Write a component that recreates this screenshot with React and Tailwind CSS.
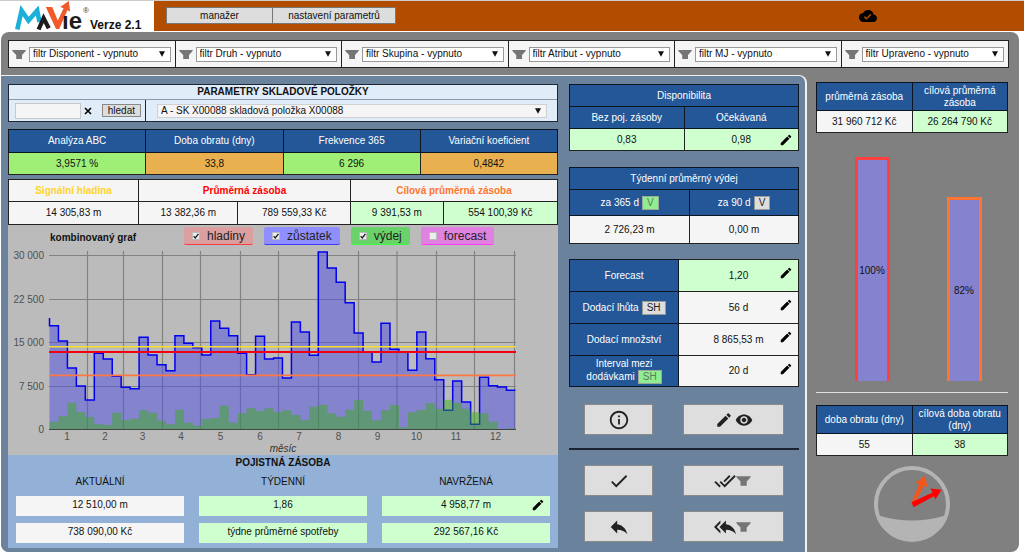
import React from "react";
import {
  MdCheck,
  MdCloudDone,
  MdDoneAll,
  MdEdit,
  MdInfoOutline,
  MdReply,
  MdReplyAll,
  MdVisibility,
} from "react-icons/md";

const filters = ["Disponent", "Druh", "Skupina", "Atribut", "MJ", "Upraveno"];

// Weekly stock level and consumption, as heights on the chart's vertical scale.
const stock = [
  242, 288, 369, 423, 465, 325, 342, 394, 427, 431, 277, 330, 359, 377, 272, 295, 308, 330, 228, 250, 272, 325, 389,
  274, 342, 339, 399, 231, 261, 331, 21, 69, 112, 173, 264, 321, 351, 235, 313, 321, 376, 261, 341, 404, 496, 408, 471,
  538, 397, 422, 426, 436,
].map((v) => 245 + v / 3);

const issues = [
  530, 514, 473, 501, 516, 538, 540, 503, 525, 521, 496, 503, 527, 538, 494, 533, 542, 522, 519, 482, 533, 505, 490,
  498, 490, 501, 496, 510, 526, 485, 479, 505, 515, 494, 465, 498, 526, 496, 480, 547, 502, 494, 475, 491, 464, 473,
  491, 502, 505, 530, 552, 550,
].map((v) => 245 + v / 3);

const LEFT = 49.5;
const STEP = 8.96;
const BASE = 429.5;

const at = (i) => LEFT + i * STEP;
const outline = "M" + LEFT + " 318 " + stock.map((y, i) => `L${at(i)} ${y} L${at(i + 1)} ${y}`).join(" ");
const area = `M${LEFT} ${BASE} ` + stock.map((y, i) => `L${at(i)} ${y} L${at(i + 1)} ${y}`).join(" ") + ` V${BASE} Z`;
const greenArea =
  `M${LEFT} ${BASE} ` + issues.map((y, i) => `L${at(i)} ${y} L${at(i + 1)} ${y}`).join(" ") + ` V${BASE} Z`;

const gridX = [87.5, 123.5, 162.5, 200.5, 240.5, 278.5, 318.5, 358.5, 397, 436.5, 474.5, 514.5];
const months = [67, 105, 142.5, 181, 220.5, 260, 299, 338.5, 377.5, 416.5, 456, 495.5];
const gridY = [
  [255.5, "30 000"],
  [299.5, "22 500"],
  [342.5, "15 000"],
  [386.5, "7 500"],
  [429.5, "0"],
];

const HEAD = "border border-[#0c1420] bg-[#235797] text-white font-normal p-0";
const GREEN = "border border-[#222] bg-[#cfffcf] p-0";
const PLAIN = "border border-[#222] bg-[#f5f5f5] p-0";
const TABLE = "w-full table-fixed border-collapse text-center leading-3";

function Funnel({ className }) {
  return (
    <svg viewBox="0 0 14 9" className={className} fill="#757575" aria-hidden="true">
      <path d="M0 0H14L13 1.8L10 5V9H4.2V5L1 1.8Z" />
    </svg>
  );
}

function Picker({ label, value, className }) {
  return (
    <div className="grid min-w-0 flex-1 items-center">
      <select
        aria-label={label}
        className={"col-start-1 row-start-1 w-full appearance-none truncate rounded-none border pl-[3px] leading-3 " + className}
      >
        <option>{value}</option>
      </select>
      <svg
        viewBox="0 0 6 6"
        className="pointer-events-none col-start-1 row-start-1 mr-[6px] h-[6px] w-[6px] justify-self-end"
        aria-hidden="true"
      >
        <path d="M0 0.3H6L3 5.8Z" fill="#111" />
      </svg>
    </div>
  );
}

function EditButton({ label }) {
  return (
    <button aria-label={label} className="block text-black">
      <MdEdit className="h-[14px] w-[14px]" />
    </button>
  );
}

function Editable({ value, label, raised }) {
  return (
    <div className="grid h-3 grid-rows-[12px] items-center">
      <span className="col-start-1 row-start-1">{value}</span>
      <span className={"col-start-1 row-start-1 justify-self-end pr-[5px] " + (raised ? "pb-[5px]" : "")}>
        <EditButton label={label} />
      </span>
    </div>
  );
}

function Logo() {
  return (
    <svg viewBox="0 0 75 31" className="h-[31px] w-[75px] overflow-visible" role="img" aria-label="MaVie">
      <path d="M2.3 29.5L6.6 10.5L13.5 20.5L22.2 10.5L24.5 22" fill="none" stroke="#1cb0d8" strokeWidth="4.6" />
      <path d="M23.6 29.5L28.6 18.2L33.8 28.2" fill="none" stroke="#1d1d1d" strokeWidth="4.2" />
      <path d="M30.8 7H37.2L42.8 20.5L48.6 8.2L45.2 7L53.8 1L55.2 11.6L52.4 10.2L44.2 29H41Z" fill="#f15a29" />
      <text x="47" y="28.5" fontSize="24" fontWeight="700" fill="#1d1d1d" fontFamily="Liberation Sans, sans-serif">
        ıe
      </text>
      <text x="68" y="13" fontSize="8" fill="#333" fontFamily="Liberation Sans, sans-serif">
        ®
      </text>
    </svg>
  );
}

function Toggle({ label, checked, className }) {
  return (
    <label className={"flex h-[18px] items-center gap-[7px] rounded-xs border-b px-2 text-xs text-[#222] " + className}>
      <span className="grid">
        <input
          type="checkbox"
          defaultChecked={checked}
          className="peer col-start-1 row-start-1 h-2 w-2 appearance-none rounded-[1px] border border-[#bbb] bg-[#eee]"
        />
        <svg
          viewBox="0 0 8 8"
          className="pointer-events-none invisible col-start-1 row-start-1 h-2 w-2 peer-checked:visible"
          aria-hidden="true"
        >
          <path d="M1.7 4.2L3.3 5.9L6.4 1.8" fill="none" stroke="#222" strokeWidth="1.4" />
        </svg>
      </span>
      {label}
    </label>
  );
}

function Chart() {
  return (
    <svg
      viewBox="8 247 550 208"
      className="block w-full"
      role="img"
      aria-label="kombinovaný graf"
      fontFamily="Liberation Sans, Arial, sans-serif"
      fontSize="10"
      fill="#505050"
    >
      <g stroke="#828282" strokeWidth="1.2">
        {gridY.map(([y]) => (
          <path key={y} d={`M49 ${y}H516`} />
        ))}
        {gridX.map((x) => (
          <path key={x} d={`M${x} 251V429`} />
        ))}
      </g>
      <path d={area} fill="rgb(75,75,225)" fillOpacity="0.5" />
      <path d={outline} fill="none" stroke="#0000f0" strokeWidth="1.5" />
      <path d={greenArea} fill="rgb(54,176,10)" fillOpacity="0.45" />
      <path d="M49 429.5H516" stroke="#444" strokeWidth="1.2" />
      <path d="M49 346.7H516" stroke="#f5e02e" strokeWidth="1.5" />
      <path d="M49 352H516" stroke="#f00010" strokeWidth="2" />
      <path d="M49 375.3H516" stroke="#ff7843" strokeWidth="1.7" />
      {gridY.map(([y, t]) => (
        <text key={t} x="44" y={y + 3.5} textAnchor="end">
          {t}
        </text>
      ))}
      {months.map((x, i) => (
        <text key={x} x={x} y="440" textAnchor="middle">
          {i + 1}
        </text>
      ))}
      <text x="283" y="452" textAnchor="middle" fontStyle="italic" fill="#333">
        měsíc
      </text>
    </svg>
  );
}

function Field({ children, green }) {
  return <div className={"h-5 px-0 pt-[3px] " + (green ? "bg-[#cfffcf]" : "bg-[#f5f5f5]")}>{children}</div>;
}

function ItemPanel() {
  return (
    <div className="min-w-0">
      <section className="border border-[#1c2733] bg-[#e1ecf9]">
        <h2 className="h-[15px] border-b border-[#8a9aa8] text-center font-bold leading-[14px]">
          PARAMETRY SKLADOVÉ POLOŽKY
        </h2>
        <div className="grid h-[21px] grid-cols-[1fr_3fr]">
          <div className="flex items-center border-r border-[#1c2733] pl-[6px] pr-1">
            <input aria-label="Hledaná položka" className="h-4 w-[66px] border border-[#c8c8c8] bg-[#f5f5f5] px-1" />
            <button aria-label="Smazat" className="ml-[3px]">
              <svg viewBox="0 0 8 8" className="h-2 w-2" aria-hidden="true">
                <path d="M1 1L7 7M7 1L1 7" stroke="#000" strokeWidth="1.6" />
              </svg>
            </button>
            <button className="ml-auto h-[13px] border border-[#888] bg-[#ddd] px-[5px] leading-[11px]">hledat</button>
          </div>
          <div className="flex items-center pl-[11px] pr-[10px]">
            <Picker
              label="Skladová položka"
              value="A - SK X00088 skladová položka X00088"
              className="h-[14px] border-[#d0d0d0] bg-[#f5f5f5]"
            />
          </div>
        </div>
      </section>

      <table className={TABLE + " mt-[7px]"}>
        <thead>
          <tr>
            {["Analýza ABC", "Doba obratu (dny)", "Frekvence 365", "Variační koeficient"].map((t) => (
              <th key={t} className={HEAD + " h-[23px]"}>
                {t}
              </th>
            ))}
          </tr>
        </thead>
        <tbody>
          <tr>
            <td className="h-[22px] border border-[#222] bg-[#9fee76] p-0">3,9571 %</td>
            <td className="h-[22px] border border-[#222] bg-[#e9b04f] p-0">33,8</td>
            <td className="h-[22px] border border-[#222] bg-[#9fee76] p-0">6 296</td>
            <td className="h-[22px] border border-[#222] bg-[#e9b04f] p-0">0,4842</td>
          </tr>
        </tbody>
      </table>

      <table className={TABLE + " mt-1"}>
        <colgroup>
          <col className="w-[23.7%]" />
          <col className="w-[18.1%]" />
          <col className="w-[20.5%]" />
          <col className="w-[16.9%]" />
          <col className="w-[20.8%]" />
        </colgroup>
        <thead>
          <tr>
            <th className={PLAIN + " h-[22px] text-[#ffd42a]"}>Signální hladina</th>
            <th colSpan={2} className={PLAIN + " text-[#ff0000]"}>
              Průměrná zásoba
            </th>
            <th colSpan={2} className={PLAIN + " text-[#ff7530]"}>
              Cílová průměrná zásoba
            </th>
          </tr>
        </thead>
        <tbody>
          <tr>
            <td className={PLAIN + " h-[23px]"}>14 305,83 m</td>
            <td className={PLAIN}>13 382,36 m</td>
            <td className={PLAIN}>789 559,33 Kč</td>
            <td className={GREEN}>9 391,53 m</td>
            <td className={GREEN}>554 100,39 Kč</td>
          </tr>
        </tbody>
      </table>

      <section className="bg-[#bbbbbb]">
        <div className="flex h-[22px] items-center">
          <h3 className="ml-[42px] w-[134px] pt-1 font-bold">kombinovaný graf</h3>
          <div className="flex gap-[11px]">
            <Toggle label="hladiny" checked className="border-[#ff3c3c] bg-[#dc9f9f]" />
            <Toggle label="zůstatek" checked className="border-[#3c3cff] bg-[#8f8fff]" />
            <Toggle label="výdej" checked className="border-[#3cff3c] bg-[#69d269]" />
            <Toggle label="forecast" className="border-[#ff3cff] bg-[#e083e0]" />
          </div>
        </div>
        <Chart />
      </section>

      <section className="bg-[#93b1d7] px-2 pb-[5px] text-center leading-3">
        <h3 className="pt-[2px] font-bold">POJISTNÁ ZÁSOBA</h3>
        <div className="mt-[7px] grid grid-cols-3 gap-x-[15px] gap-y-[7px]">
          <div className="pb-[1px]">AKTUÁLNÍ</div>
          <div className="pb-[1px]">TÝDENNÍ</div>
          <div className="pb-[1px]">NAVRŽENÁ</div>
          <Field>12 510,00 m</Field>
          <Field green>1,86</Field>
          <Field green>
            <Editable value="4 958,77 m" label="Upravit navrženou zásobu" />
          </Field>
          <Field>738 090,00 Kč</Field>
          <Field green>týdne průměrné spotřeby</Field>
          <Field green>292 567,16 Kč</Field>
        </div>
      </section>
    </div>
  );
}

function Tag({ children, green }) {
  return (
    <button
      className={
        "ml-[3px] h-[14px] border px-1 leading-3 " +
        (green ? "border-[#9aa89a] bg-[#90ee90] text-[#5d7a5d]" : "border-[#999] bg-[#ddd] text-[#222]")
      }
    >
      {children}
    </button>
  );
}

function ActionButton({ label, children }) {
  return (
    <button
      aria-label={label}
      className="flex h-[31px] items-center justify-center border border-[#8a8a8a] bg-[#dedede] text-[#222]"
    >
      {children}
    </button>
  );
}

function DetailPanel() {
  return (
    <div className="min-w-0">
      <table className={TABLE}>
        <thead>
          <tr>
            <th colSpan={2} className={HEAD + " h-[22px]"}>
              Disponibilita
            </th>
          </tr>
          <tr>
            <th className={HEAD + " h-[22px]"}>Bez poj. zásoby</th>
            <th className={HEAD}>Očekávaná</th>
          </tr>
        </thead>
        <tbody>
          <tr>
            <td className={GREEN + " h-[22px]"}>0,83</td>
            <td className={GREEN}>
              <Editable value="0,98" label="Upravit očekávanou disponibilitu" />
            </td>
          </tr>
        </tbody>
      </table>

      <table className={TABLE + " mt-4"}>
        <colgroup>
          <col className="w-[52.5%]" />
          <col className="w-[47.5%]" />
        </colgroup>
        <thead>
          <tr>
            <th colSpan={2} className={HEAD + " h-[22px]"}>
              Týdenní průměrný výdej
            </th>
          </tr>
          <tr>
            <th className={HEAD + " h-[26px]"}>
              za 365 d<Tag green>V</Tag>
            </th>
            <th className={HEAD}>
              za 90 d<Tag>V</Tag>
            </th>
          </tr>
        </thead>
        <tbody>
          <tr>
            <td className={PLAIN + " h-[28px]"}>2 726,23 m</td>
            <td className={PLAIN}>0,00 m</td>
          </tr>
        </tbody>
      </table>

      <table className={TABLE + " mt-[15px]"}>
        <colgroup>
          <col className="w-[47.6%]" />
          <col className="w-[52.4%]" />
        </colgroup>
        <tbody>
          <tr>
            <th className={HEAD + " h-8"}>Forecast</th>
            <td className={GREEN}>
              <Editable value="1,20" label="Upravit forecast" raised />
            </td>
          </tr>
          <tr>
            <th className={HEAD + " h-8"}>
              Dodací lhůta
              <Tag>SH</Tag>
            </th>
            <td className={PLAIN}>
              <Editable value="56 d" label="Upravit dodací lhůtu" raised />
            </td>
          </tr>
          <tr>
            <th className={HEAD + " h-8"}>Dodací množství</th>
            <td className={PLAIN}>
              <Editable value="8 865,53 m" label="Upravit dodací množství" raised />
            </td>
          </tr>
          <tr>
            <th className={HEAD + " h-[31px]"}>
              Interval mezi
              <br />
              dodávkami
              <Tag green>SH</Tag>
            </th>
            <td className={PLAIN}>
              <Editable value="20 d" label="Upravit interval" raised />
            </td>
          </tr>
        </tbody>
      </table>

      <div className="mt-[17px] grid grid-cols-[69fr_100fr] gap-x-[30px] px-[15px]">
        <ActionButton label="Informace">
          <MdInfoOutline className="h-[22px] w-[22px]" />
        </ActionButton>
        <ActionButton label="Upravit a zobrazit">
          <MdEdit className="mr-[2px] h-[18px] w-[18px]" />
          <MdVisibility className="h-[18px] w-[18px]" />
        </ActionButton>
      </div>
      <hr className="mb-[15px] mt-[13px] border-t-2 border-[#1b2330]" />
      <div className="grid grid-cols-[69fr_100fr] gap-x-[30px] gap-y-[15px] px-[15px]">
        <ActionButton label="Potvrdit">
          <MdCheck className="h-[22px] w-[22px]" />
        </ActionButton>
        <ActionButton label="Potvrdit vše ve filtru">
          <MdDoneAll className="h-[22px] w-[22px]" />
          <Funnel className="mr-[3px] h-[10px] w-[15px]" />
        </ActionButton>
        <ActionButton label="Zpět">
          <MdReply className="h-[22px] w-[22px]" />
        </ActionButton>
        <ActionButton label="Vrátit vše ve filtru">
          <MdReplyAll className="h-[22px] w-[22px]" />
          <Funnel className="mr-[3px] h-[10px] w-[15px]" />
        </ActionButton>
      </div>
    </div>
  );
}

function SummaryTable({ heads, values }) {
  return (
    <table className={TABLE}>
      <thead>
        <tr>
          {heads.map((t) => (
            <th key={t} className={HEAD + " h-7"}>
              {t}
            </th>
          ))}
        </tr>
      </thead>
      <tbody>
        <tr>
          <td className={PLAIN + " h-[22px]"}>{values[0]}</td>
          <td className={GREEN}>{values[1]}</td>
        </tr>
      </tbody>
    </table>
  );
}

function Bar({ percent, className }) {
  return (
    <div
      className={"flex w-[35px] items-center justify-center border-x-[3px] border-t-[3px] bg-[#8583cf] " + className}
      style={{ height: percent + "%" }}
    >
      {percent}%
    </div>
  );
}

function Gauge() {
  return (
    <svg viewBox="0 0 78 78" className="mx-auto mt-[9px] block h-[78px] w-[78px]" aria-hidden="true">
      <path d="M5.5 50.5Q39 60.5 72.5 50.5A36 36 0 0 1 5.5 50.5Z" fill="#b4b4b4" />
      <circle cx="39" cy="39" r="36" fill="none" stroke="#b4b4b4" strokeWidth="4" />
      <path d="M37.8 39.2L46 19.2L42.4 17.8L52.3 10.8L54.4 22.2L51 20.8L41 39.5Z" fill="#f0561e" />
      <path d="M38.6 37.2L59.6 27.5L57.4 23.4L68.6 24.8L62.4 34.6L60.9 31.2L40.6 42.2Z" fill="#ff0000" />
    </svg>
  );
}

export default function App() {
  return (
    <div className="min-h-screen bg-white pb-[7px] font-['Liberation_Sans',Arial,sans-serif] text-[10px] leading-3 text-[#111]">
      <header className="flex h-[31px] border-t border-[#ccc]">
        <div className="flex w-[154px] shrink-0 items-end pl-[15px]">
          <Logo />
          <span className="text-xs font-bold leading-3">Verze 2.1</span>
        </div>
        <div className="flex flex-1 items-start bg-[#b24d00] pl-3 pt-[6px]">
          <nav className="flex">
            <button className="h-[17px] w-[107px] border border-[#777] bg-[#ddd]">manažer</button>
            <button className="-ml-px h-[17px] w-[124px] border border-[#777] bg-[#ddd]">nastavení parametrů</button>
          </nav>
          <div className="flex flex-1 justify-end pr-[147px]">
            <MdCloudDone className="h-[18px] w-[18px] text-black" aria-label="Uloženo" />
          </div>
        </div>
      </header>

      <main className="ml-px mr-[5px] mt-px rounded-t-lg rounded-b-lg bg-[#808080] pt-2">
        <div className="ml-[7px] mr-[10px] grid h-7 grid-cols-6 divide-x divide-[#222] border border-[#222] bg-[#f5f5f5]">
          {filters.map((f) => (
            <div key={f} className="flex min-w-0 items-center gap-[3px] pl-[3px] pr-1">
              <Funnel className="h-[9px] w-[14px] shrink-0" />
              <Picker
                label={"Filtr " + f}
                value={"filtr " + f + " - vypnuto"}
                className="h-[15px] border-[#999] bg-white"
              />
            </div>
          ))}
        </div>

        <div className="mt-[7px] grid grid-cols-[806fr_212fr]">
          <div className="grid grid-cols-[550fr_230fr] gap-x-[11px] rounded-tr-lg rounded-bl-lg border-r-2 border-t border-[#f0f0f0] bg-[#6b829c] pb-1 pl-[7px] pr-[6px] pt-2">
            <ItemPanel />
            <DetailPanel />
          </div>

          <aside className="min-w-0 pl-[9px] pr-[11px] pt-[7px]">
            <SummaryTable heads={["průměrná zásoba", "cílová průměrná zásoba"]} values={["31 960 712 Kč", "26 264 790 Kč"]} />
            <div className="mt-6 grid h-56 grid-cols-2 items-end justify-items-center">
              <Bar percent={100} className="ml-4 border-[#ff4040]" />
              <Bar percent={82} className="ml-2 border-[#ff7430]" />
            </div>
            <hr className="mb-3 mt-[11px] border-t border-[#e0e0e0]" />
            <SummaryTable heads={["doba obratu (dny)", "cílová doba obratu (dny)"]} values={["55", "38"]} />
            <Gauge />
          </aside>
        </div>
      </main>
    </div>
  );
}
